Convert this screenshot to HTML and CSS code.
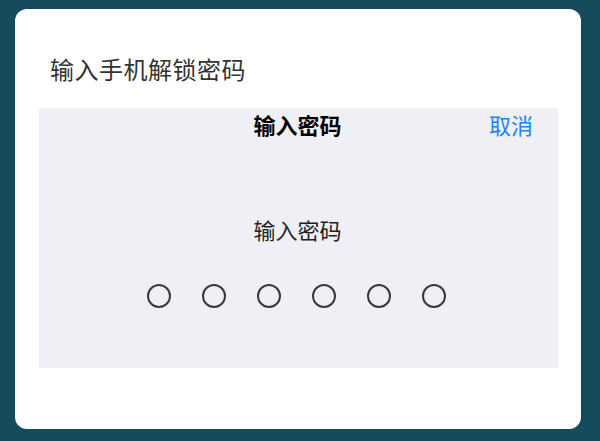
FILE: index.html
```html
<!DOCTYPE html>
<html lang="zh-CN">

<head>
    <meta charset="UTF-8">
    <meta name="viewport" content="width=device-width, initial-scale=1.0">
    <title>输入手机解锁密码</title>
    <link rel="stylesheet" href="styles.css">
</head>

<body>
    <div class="dialog">
        <h1 class="dialog-title">输入手机解锁密码</h1>

        <div class="passcode">
            <div class="passcode-header">
                <span></span>
                <h2>输入密码</h2>
                <button class="cancel" type="button">取消</button>
            </div>

            <p class="passcode-label">输入密码</p>

            <div class="dots">
                <span class="dot"></span>
                <span class="dot"></span>
                <span class="dot"></span>
                <span class="dot"></span>
                <span class="dot"></span>
                <span class="dot"></span>
            </div>
        </div>
    </div>
</body>

</html>
```

FILE: styles.css
```css
body {
    font-family: "Noto Sans CJK SC", "Noto Sans", sans-serif;
    background-color: #154b5a;
    margin: 0;
    padding: 9px 19px 12px 15px;
}

.dialog {
    background-color: #fff;
    border-radius: 12px;
    height: 420px;
    padding: 0 23px 0 24px;
    box-sizing: border-box;
}

.dialog-title {
    margin: 0;
    padding: 48px 0 27px 11px;
    font-size: 24px;
    line-height: 24px;
    font-weight: 400;
    color: #333;
    letter-spacing: 0.5px;
}

.passcode {
    background-color: #f0eff5;
    height: 260px;
}

.passcode-header {
    display: grid;
    grid-template-columns: 1fr auto 1fr;
    align-items: center;
    padding: 5px 25px 0 25px;
}

.passcode-header h2 {
    margin: 0 2px 0 0;
    font-size: 22px;
    line-height: 22px;
    font-weight: 700;
    color: #000;
}

.cancel {
    justify-self: end;
    border: none;
    background: none;
    padding: 0;
    font-family: inherit;
    font-size: 22px;
    line-height: 22px;
    color: #1a84f6;
}

.passcode-label {
    margin: 83px 2px 0 0;
    text-align: center;
    font-size: 22px;
    line-height: 22px;
    color: #222;
}

.dots {
    display: flex;
    justify-content: center;
    gap: 31px;
    margin: 44px 4px 0 0;
}

.dot {
    width: 24px;
    height: 24px;
    border: 2px solid #3a3a3a;
    border-radius: 50%;
    box-sizing: border-box;
}
```
